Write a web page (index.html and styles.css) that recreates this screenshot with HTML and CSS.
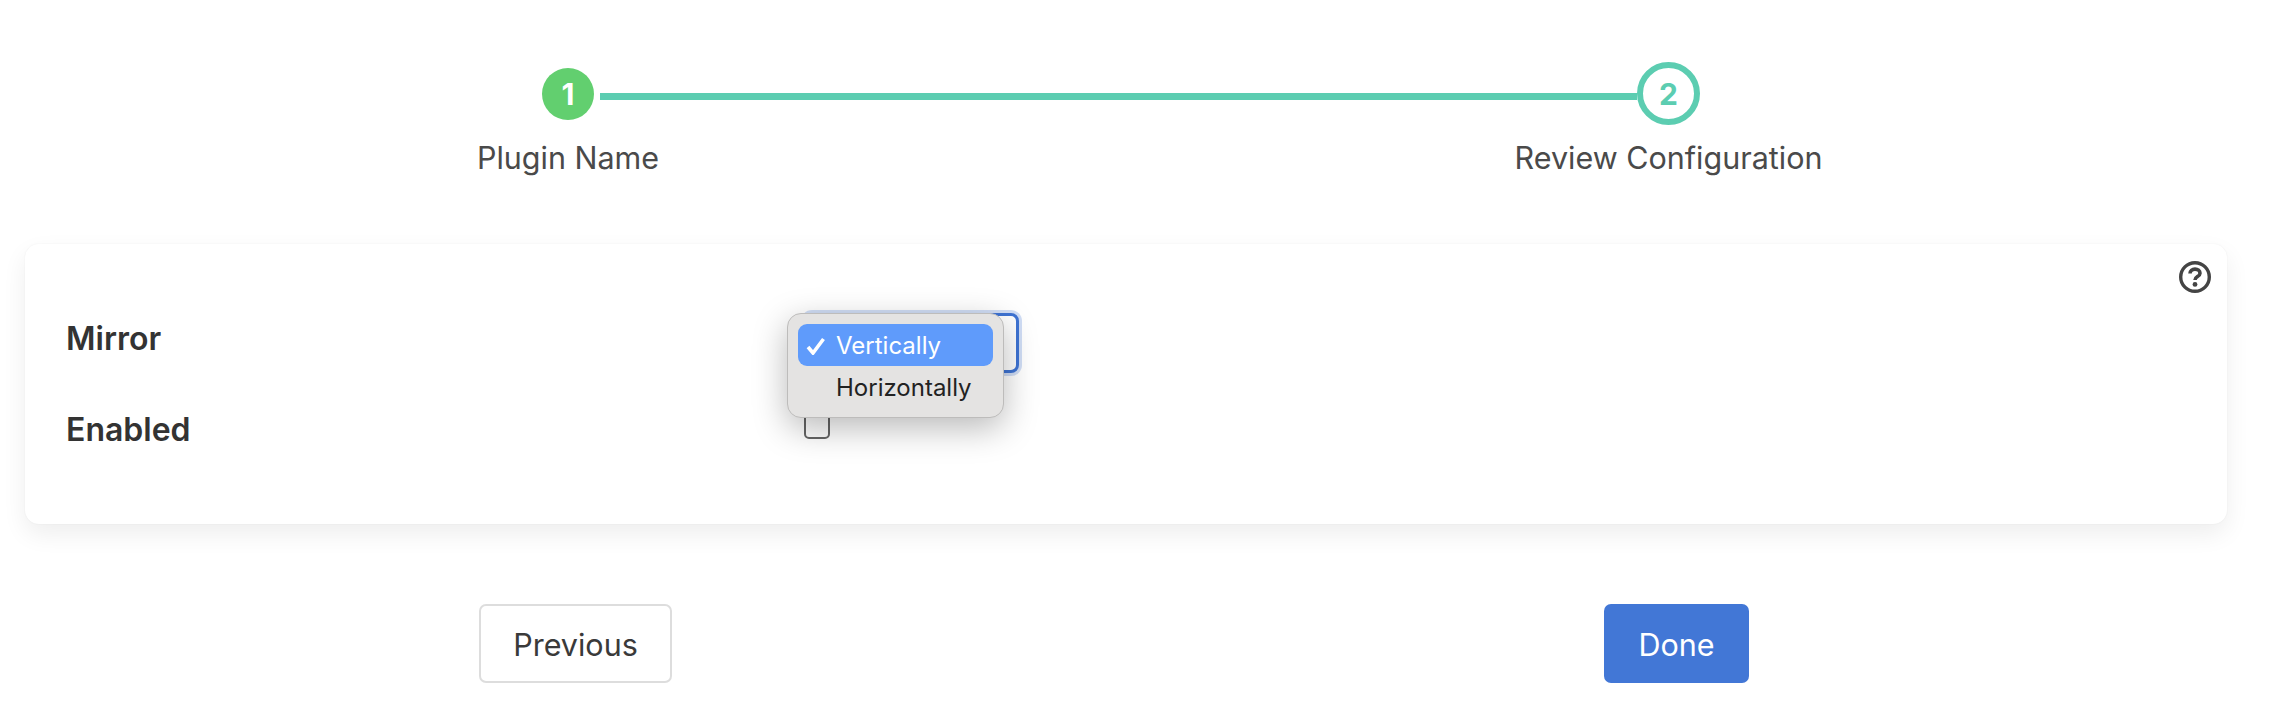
FILE: index.html

```html
<!DOCTYPE html>
<html lang="en">
<head>
<meta charset="UTF-8" />
<title>Plugin Name</title>
<link rel="stylesheet" href="styles.css">
</head>
<body>

<div class="stepper">
  <div class="step-circle step-done">1</div>
  <div class="step-line"></div>
  <div class="step-circle step-current">2</div>
  <div class="step-label step-label-first">Plugin Name</div>
  <div class="step-label step-label-last">Review Configuration</div>
</div>

<form class="card">
  <a class="help-link" href="#">
    <svg width="34" height="34" viewBox="0 0 34 34" fill="none" stroke="#444" stroke-width="3.4">
      <circle cx="17" cy="17" r="14.3"/>
      <path d="M12 13.6c0-2.8 2.2-4.5 5-4.5 2.8 0 5 1.6 5 4.1 0 3.6-5 3.2-5 6.8" stroke-width="3.6"/>
      <circle cx="17" cy="24.4" r="2.4" fill="#444" stroke="none"/>
    </svg>
  </a>

  <div class="form-row form-row-select">
    <label class="form-label" for="mirror">Mirror</label>
    <div class="select-wrap">
      <select class="form-select" id="mirror" name="mirror">
        <option>Vertically</option>
        <option>Horizontally</option>
      </select>
      <ul class="select-menu">
        <li class="select-option select-option-active">
          <svg class="select-check" width="20" height="18" viewBox="0 0 20 18" fill="none" stroke="#fff" stroke-width="3.6">
            <path d="M2 10l5 6L17.5 2"/>
          </svg>
          Vertically
        </li>
        <li class="select-option">Horizontally</li>
      </ul>
    </div>
  </div>

  <div class="form-row">
    <label class="form-label" for="enabled">Enabled</label>
    <div class="form-check"><input class="check-box" type="checkbox" id="enabled" name="enabled"></div>
  </div>
</form>

<div class="wizard-buttons">
  <button class="btn btn-light" type="button">Previous</button>
  <button class="btn btn-primary" type="button">Done</button>
</div>

</body>
</html>
```

FILE: styles.css

```css
* { box-sizing: border-box; }
body { margin: 0; background: #fff; font-family: Inter, "Liberation Sans", sans-serif; color: #333; overflow: hidden; }

.stepper { display: grid; grid-template-columns: 52px 1fr 63px; align-items: center; column-gap: 6px; margin: 62px 574px 0 542px; }
.step-circle { display: flex; align-items: center; justify-content: center; border-radius: 50%; font-size: 30px; font-weight: 700; }
.step-done { width: 52px; height: 52px; background: #62cf6f; color: #fff; }
.step-current { width: 63px; height: 63px; border: 6px solid #5ccdb1; color: #5ccdb1; }
.step-line { height: 7px; margin-right: -6px; background: #5ccdb1; transform: translateY(3px); }
.step-label { margin-top: 15px; justify-self: center; white-space: nowrap; font-size: 30.5px; line-height: 36px; color: #4a4a4a; }
.step-label-first { grid-column: 1; }
.step-label-last { grid-column: 3; }

.card { position: relative; margin: 68px 47px 0 25px; height: 280px; padding: 69px 0 0 41px; background: #fff; border-radius: 14px; box-shadow: 0 0 2px rgba(0,0,0,.06), 0 10px 24px rgba(0,0,0,.07); }
.help-link { position: absolute; top: 16px; right: 15px; display: block; line-height: 0; }

.form-row { display: grid; grid-template-columns: 738px 1fr; align-items: center; }
.form-row-select { height: 60px; margin-bottom: 37px; }
.form-label { padding-bottom: 10px; font-size: 32px; font-weight: 600; color: #333; }

.select-wrap { position: relative; width: 215px; height: 60px; }
.form-select { display: block; width: 100%; height: 60px; padding: 0 16px; appearance: none; background: #fff; border: 3px solid #3f74d4; border-radius: 8px; box-shadow: 0 0 0 3px rgba(66,119,214,.25); font: inherit; font-size: 24px; }
.select-menu { position: absolute; top: 0; left: -17px; width: 217px; height: 105px; margin: 0; padding: 10px; list-style: none; background: #e4e3e2; border: 1px solid #bdbcbb; border-radius: 14px; box-shadow: 0 10px 34px rgba(0,0,0,.28); }
.select-option { position: relative; height: 42px; padding-left: 38px; font-size: 24px; line-height: 43px; color: #222; }
.select-option-active { background: #5f9bfb; border-radius: 9px; color: #fff; }
.select-check { position: absolute; left: 8px; top: 13px; }

.form-check { align-self: start; height: 26px; margin-top: 3px; }
.check-box { display: block; width: 26px; height: 26px; margin: 0; appearance: none; background: #fff; border: 2px solid #666; border-radius: 5px; }

.wizard-buttons { display: flex; justify-content: space-between; margin: 80px 525px 0 479px; }
.btn { height: 79px; padding-top: 2px; border-radius: 7px; font: inherit; font-size: 30.5px; }
.btn-light { width: 193px; background: #fff; border: 2px solid #ddd; color: #3a3a3a; }
.btn-primary { width: 145px; background: #4277d6; border: 0; color: #fff; }
```
